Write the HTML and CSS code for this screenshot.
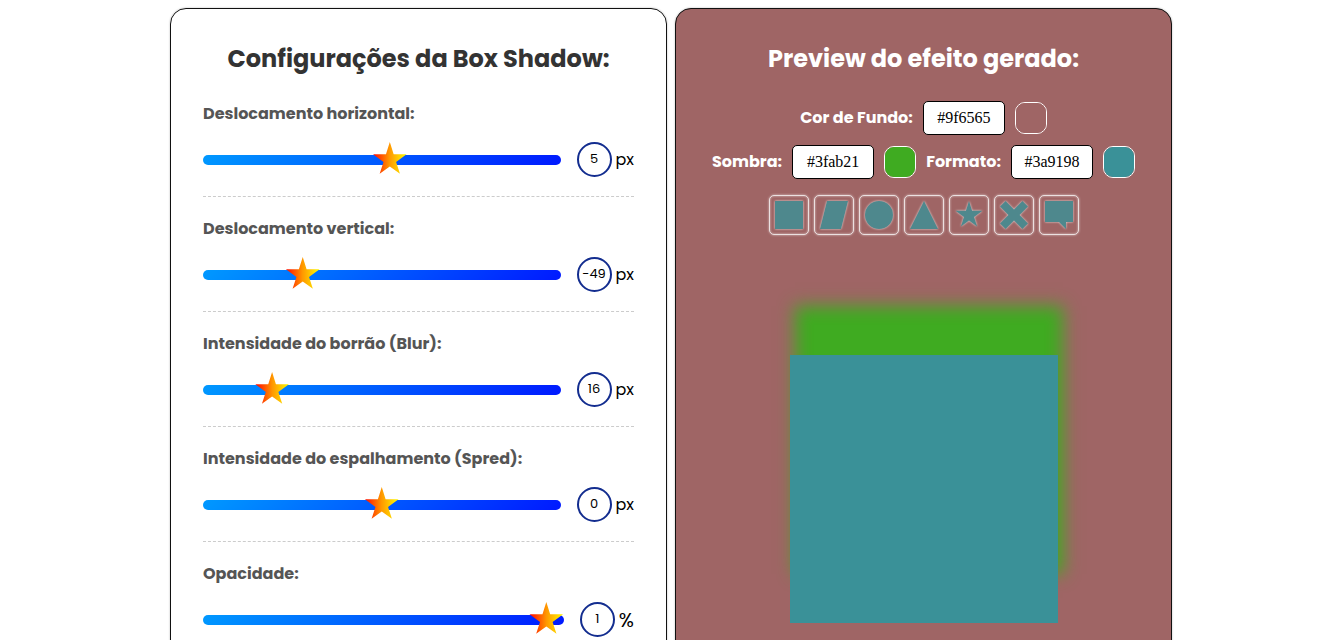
FILE: index.html
```html
<!DOCTYPE html>
<html lang="pt-BR">
<head>
<meta charset="utf-8">
<meta name="viewport" content="width=device-width, initial-scale=1">
<title>Gerador de Box Shadow</title>
<link rel="stylesheet" href="styles.css">
</head>
<body>
<main class="layout">
  <section class="card settings">
    <h2 class="card-title">Configurações da Box Shadow:</h2>
    <div class="field">
      <label class="field-label" for="horizontal">Deslocamento horizontal:</label>
      <div class="field-row">
        <input class="slider" id="horizontal" type="range" min="-100" max="100" value="5">
        <div class="reading"><output class="value" for="horizontal">5</output><span class="unit">px</span></div>
      </div>
    </div>
    <div class="field">
      <label class="field-label" for="vertical">Deslocamento vertical:</label>
      <div class="field-row">
        <input class="slider" id="vertical" type="range" min="-100" max="100" value="-49">
        <div class="reading"><output class="value" for="vertical">-49</output><span class="unit">px</span></div>
      </div>
    </div>
    <div class="field">
      <label class="field-label" for="blur">Intensidade do borrão (Blur):</label>
      <div class="field-row">
        <input class="slider" id="blur" type="range" min="0" max="100" value="16">
        <div class="reading"><output class="value" for="blur">16</output><span class="unit">px</span></div>
      </div>
    </div>
    <div class="field">
      <label class="field-label" for="spread">Intensidade do espalhamento (Spred):</label>
      <div class="field-row">
        <input class="slider" id="spread" type="range" min="-100" max="100" value="0">
        <div class="reading"><output class="value" for="spread">0</output><span class="unit">px</span></div>
      </div>
    </div>
    <div class="field">
      <label class="field-label" for="opacity">Opacidade:</label>
      <div class="field-row">
        <input class="slider" id="opacity" type="range" min="0" max="1" step="0.01" value="1">
        <div class="reading"><output class="value" for="opacity">1</output><span class="unit unit-percent">%</span></div>
      </div>
    </div>
  </section>

  <section class="card preview">
    <h2 class="card-title">Preview do efeito gerado:</h2>
    <div class="colors">
      <div class="color">
        <label class="color-label" for="background-hex">Cor de Fundo:</label>
        <input class="hex" id="background-hex" type="text" value="#9f6565">
        <input class="swatch" type="color" value="#9f6565" aria-label="Escolher cor de fundo">
      </div>
      <div class="color">
        <label class="color-label" for="shadow-hex">Sombra:</label>
        <input class="hex" id="shadow-hex" type="text" value="#3fab21">
        <input class="swatch" type="color" value="#3fab21" aria-label="Escolher cor da sombra">
      </div>
      <div class="color">
        <label class="color-label" for="shape-hex">Formato:</label>
        <input class="hex" id="shape-hex" type="text" value="#3a9198">
        <input class="swatch" type="color" value="#3a9198" aria-label="Escolher cor do formato">
      </div>
    </div>
    <div class="shapes">
      <button class="shape" type="button" aria-label="Quadrado"><svg viewBox="0 0 100 100"><path d="M0 0H100V100H0Z"/></svg></button>
      <button class="shape" type="button" aria-label="Paralelogramo"><svg viewBox="0 0 100 100"><path d="M25 0H100L75 100H0Z"/></svg></button>
      <button class="shape" type="button" aria-label="Círculo"><svg viewBox="0 0 100 100"><circle cx="50" cy="50" r="50"/></svg></button>
      <button class="shape" type="button" aria-label="Triângulo"><svg viewBox="0 0 100 100"><path d="M50 0L100 100H0Z"/></svg></button>
      <button class="shape" type="button" aria-label="Estrela"><svg viewBox="0 0 100 100"><path d="M50 0L61 35H98L68 57L79 91L50 70L21 91L32 57L2 35H39Z"/></svg></button>
      <button class="shape" type="button" aria-label="Xis"><svg viewBox="0 0 100 100"><path d="M20 0L0 20L30 50L0 80L20 100L50 70L80 100L100 80L70 50L100 20L80 0L50 30Z"/></svg></button>
      <button class="shape" type="button" aria-label="Balão"><svg viewBox="0 0 100 100"><path d="M0 0H100V75H75V100L50 75H0Z"/></svg></button>
    </div>
    <div class="sample"></div>
  </section>
</main>
</body>
</html>
```
FILE: styles.css
```css
*,
*::before,
*::after {
  box-sizing: border-box;
}

body {
  margin: 0;
  padding: 8px 9px 8px 8px;
  background: #fff;
  color: #000;
  font-family: Poppins, Inter, "Open Sans", sans-serif;
  font-size: 16px;
  line-height: 24px;
}

.layout {
  display: grid;
  grid-template-columns: repeat(auto-fit, minmax(320px, 1fr));
  gap: 8px;
  max-width: 1002px;
  margin: 0 auto;
}

.card {
  padding: 32px;
  border: 1px solid #111;
  border-radius: 16px;
  box-shadow: 0 0 2px rgba(0, 0, 0, 0.3);
}

.card-title {
  margin: 0 0 24px;
  font-size: 24px;
  font-weight: 700;
  line-height: 36px;
  text-align: center;
}

.settings .card-title {
  margin-bottom: 25px;
  color: #333;
}

.field + .field {
  margin-top: 20px;
}

.field {
  padding-bottom: 19px;
  border-bottom: 1px dashed #ccc;
}

.field:last-child {
  border-bottom: 0;
}

.field-label {
  display: block;
  margin-bottom: 16px;
  color: #555;
  font-weight: 700;
}

.field-row {
  display: flex;
  align-items: center;
  gap: 16px;
}

.slider {
  appearance: none;
  flex: 1;
  min-width: 0;
  height: 10px;
  margin: 0;
  border-radius: 5px;
  background: linear-gradient(135deg, #09f, #0019ff);
}

.slider::-webkit-slider-thumb {
  appearance: none;
  width: 35px;
  height: 35px;
  background: linear-gradient(90deg, #f00, #ff9800 50%, #ff0);
  clip-path: polygon(50% 0%, 61% 35%, 98% 35%, 68% 57%, 79% 91%, 50% 70%, 21% 91%, 32% 57%, 2% 35%, 39% 35%);
}

.reading {
  display: flex;
  align-items: center;
  gap: 4px;
}

.value {
  display: flex;
  justify-content: center;
  width: 35px;
  height: 35px;
  border: 2px solid #132d8f;
  border-radius: 50%;
  font-size: 13px;
  line-height: 30px;
}

.unit-percent {
  font-size: 20px;
}

.preview {
  background: #9f6565;
  color: #fff;
}

.colors {
  display: flex;
  flex-wrap: wrap;
  justify-content: center;
  gap: 10px;
}

.color {
  display: flex;
  align-items: center;
  gap: 10px;
}

.color:first-child {
  flex-basis: 100%;
  justify-content: center;
}

.color-label {
  font-weight: 700;
}

.hex {
  width: 82px;
  height: 34px;
  padding: 0;
  border: 1px solid #000;
  border-radius: 5px;
  background: #fff;
  color: #000;
  font: 16px "Liberation Serif", serif;
  text-align: center;
}

.swatch {
  appearance: none;
  width: 32px;
  height: 32px;
  padding: 0;
  border: 1px solid #fff;
  border-radius: 10px;
  background: none;
  overflow: hidden;
}

.swatch::-webkit-color-swatch-wrapper {
  padding: 0;
}

.swatch::-webkit-color-swatch {
  border: 0;
}

.shapes {
  display: flex;
  flex-wrap: wrap;
  justify-content: center;
  gap: 5px;
  margin-top: 16px;
}

.shape {
  width: 40px;
  height: 40px;
  padding: 5px;
  border: 1px solid #fff;
  border-radius: 5px;
  background: none;
  filter: drop-shadow(0 0 1px #fff);
  opacity: 0.8;
}

.shape svg {
  display: block;
  fill: #3a9198;
}

.sample {
  width: 268px;
  max-width: 100%;
  aspect-ratio: 1;
  margin: 120px auto 0;
  background: #3a9198;
  box-shadow: 5px -49px 16px 0 #3fab21;
}
```
